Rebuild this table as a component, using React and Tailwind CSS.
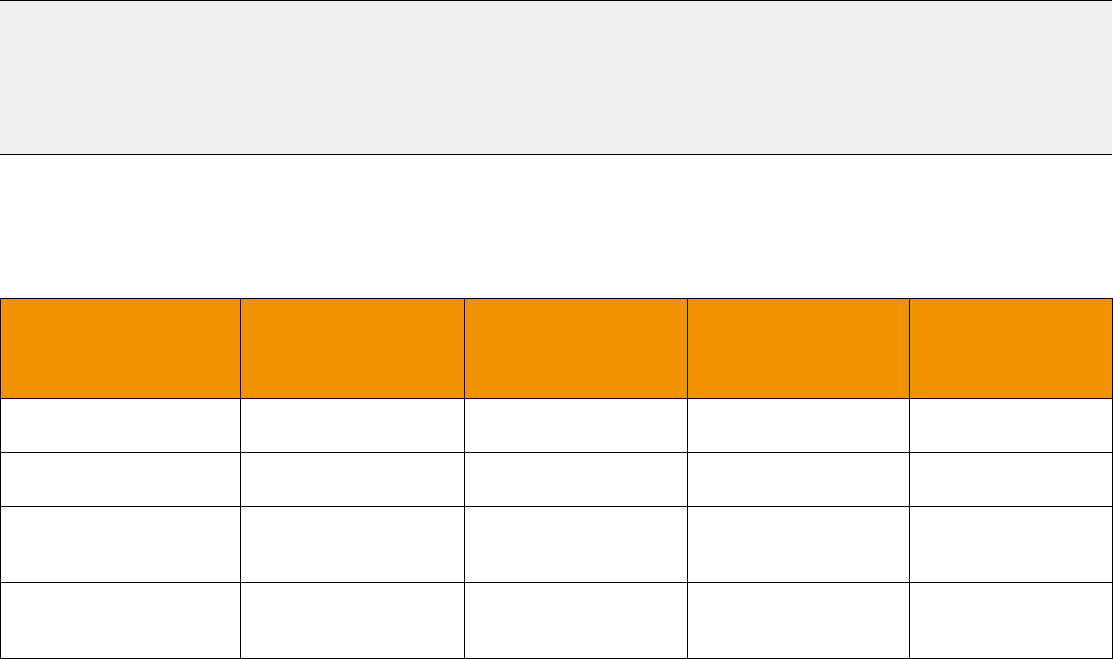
export default function App() {
  const cols = ["w-[240px]", "w-[224px]", "w-[223px]", "w-[222px]", "w-[203px]"];
  const rows = ["h-[54px]", "h-[54px]", "h-[76px]", "h-[76px]"];
  return (
    <div className="w-[1113px] h-[659px] bg-white overflow-hidden font-['Liberation_Sans',sans-serif]">
      <div className="w-[1112px] h-[155px] bg-[#efefef] border-t border-b border-black" />
      <div className="mt-[143px] flex flex-col border-l border-t border-black w-[1113px]">
        <div className="flex h-[100px]">
          {cols.map((c, i) => (
            <div key={i} className={`${c} shrink-0 bg-[#f09200] border-r border-b border-black`} />
          ))}
        </div>
        {rows.map((h, r) => (
          <div key={r} className={`flex ${h}`}>
            {cols.map((c, i) => (
              <div key={i} className={`${c} shrink-0 bg-white border-r border-b border-black`} />
            ))}
          </div>
        ))}
      </div>
    </div>
  );
}
